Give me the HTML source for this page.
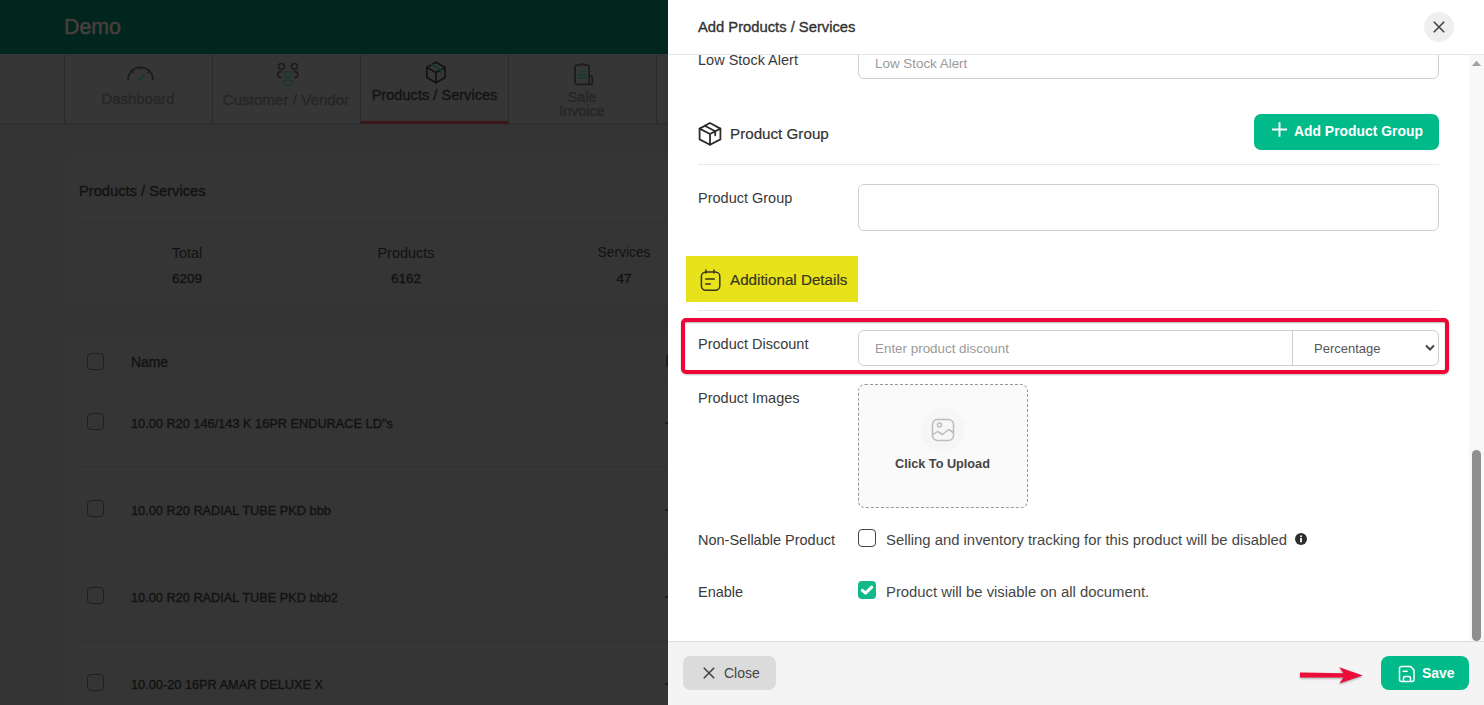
<!DOCTYPE html>
<html><head><meta charset="utf-8">
<style>
*{box-sizing:border-box;margin:0;padding:0}
html,body{width:1484px;height:705px;overflow:hidden;background:#333333;font-family:"Liberation Sans",sans-serif}
.abs{position:absolute}
#hdr{left:0;top:0;width:1484px;height:54px;background:#00261e}
#demo{left:64px;top:15px;font-size:21.3px;color:#483f3c;-webkit-text-stroke:0.55px #483f3c}
#tabs{left:0;top:54px;width:668px;height:70px;background:#363636;border-bottom:1px solid #2c2c2c}
.tdiv{top:54px;width:1px;height:69px;background:#2b2b2b}
.tlabel{font-size:14px;color:#262626;-webkit-text-stroke:0.4px #262626;text-align:center;white-space:nowrap}
.card{background:#353535;border-radius:10px;border-left:7px solid #343434;border-top:6px solid #343434}
.dtxt{color:#121212;font-size:14px;white-space:nowrap}
.sb{-webkit-text-stroke:0.35px #121212}
.nm{font-size:12.75px}
.row-line{height:1px;background:#313131}
.cbx{width:17px;height:17px;border:1.5px solid #1f1f1f;border-radius:4px}
/* panel */
#panel{left:668px;top:0;width:816px;height:705px;background:#fff}
.lbl{font-size:14px;color:#333}
.inp{border:1px solid #cfcfcf;border-radius:6px;background:#fff}
.ttl{font-size:14.75px;color:#333;-webkit-text-stroke:0.35px #333}
.ph{font-size:13.4px;color:#9a9a9a}
.sec{font-size:15.2px;color:#333;-webkit-text-stroke:0.2px #333}
.gbtn{background:#00ba8a;border-radius:7px}
.gbt{font-size:13.9px;font-weight:bold;color:#fff}
.upl{font-size:12.7px;font-weight:bold;color:#444}
.txt{font-size:14.85px;color:#464646}
.lbl{font-size:14.5px;color:#3a3a3a}
</style></head>
<body>
<div id="hdr" class="abs"></div>
<div id="demo" class="abs">Demo</div>
<div id="tabs" class="abs"></div>
<div class="abs tdiv" style="left:64px"></div>
<div class="abs tdiv" style="left:212px"></div>
<div class="abs tdiv" style="left:360px"></div>
<div class="abs tdiv" style="left:508px"></div>
<div class="abs tdiv" style="left:656px"></div>
<svg class="abs" style="left:120px;top:58px" width="40" height="30" viewBox="0 0 40 30" fill="none" stroke-linecap="round"><path d="M8.1 21.7A12.4 12.4 0 0 1 32.9 21.7" stroke="#1c1c1c" stroke-width="1.8"/><path d="M20.5 9.3v2M11.7 13l1.3 1.3M29.3 13l-1.3 1.3" stroke="#1c1c1c" stroke-width="1.6"/><path d="M20.3 21.4L23.4 17.5" stroke="#163a2e" stroke-width="1.8"/></svg>
<svg class="abs" style="left:270px;top:58px" width="36" height="32" viewBox="0 0 36 32" fill="none" stroke-width="1.6"><circle cx="11.4" cy="8.4" r="2.9" stroke="#1c1c1c"/><circle cx="24.4" cy="8.4" r="2.9" stroke="#1c1c1c"/><path d="M12 13.6H10.2A3 3 0 0 0 10.2 19.5H12M23.6 13.6H25.4A3 3 0 0 1 25.4 19.5H23.6" stroke="#1c1c1c"/><circle cx="17.8" cy="16.4" r="3" stroke="#163a2e"/><ellipse cx="17.8" cy="24.6" rx="4.5" ry="2.9" stroke="#163a2e"/></svg>
<svg class="abs" style="left:420px;top:56px" width="32" height="32" viewBox="0 0 32 32" fill="none" stroke-width="1.7" stroke-linejoin="round" stroke-linecap="round"><path d="M16 6.2l9.2 5.2v10.2l-9.2 5.2l-9.2 -5.2v-10.2z" stroke="#121212"/><path d="M6.8 11.4L16 16.6L25.2 11.4M16 16.6V26.8" stroke="#121212"/><path d="M11.4 8.6L20.9 13.8V17.5" stroke="#123a2d"/></svg>
<svg class="abs" style="left:566px;top:58px" width="36" height="32" viewBox="0 0 36 32" fill="none" stroke-width="1.7" stroke-linejoin="round" stroke-linecap="round"><path d="M11.5 7.2h2.5l2.4 -1.6l2.4 1.6h2.5a1.8 1.8 0 0 1 1.8 1.8v17.3h-12.3a1.8 1.8 0 0 1 -1.8 -1.8v-15.5a1.8 1.8 0 0 1 1.8 -1.8z" stroke="#1c1c1c"/><path d="M23.6 18.2h1.4a1.4 1.4 0 0 1 1.4 1.4v5.3a1.4 1.4 0 0 1 -1.4 1.4h-1.4" stroke="#1c1c1c"/><path d="M14.5 13.5h4.2M12.8 16.9h7.6M12.8 20.1h7.6" stroke="#163a2e"/></svg>
<div class="abs tlabel" style="left:64px;width:148px;top:91px;font-size:14.9px">Dashboard</div>
<div class="abs tlabel" style="left:212px;width:148px;top:91px;font-size:15.2px">Customer / Vendor</div>
<div class="abs tlabel" style="left:361px;width:147px;top:87px;font-size:14.6px;color:#141414;-webkit-text-stroke-color:#141414">Products / Services</div>
<div class="abs" style="left:361px;top:121px;width:147px;height:3px;background:#3a1716"></div>
<div class="abs tlabel" style="left:508px;width:148px;top:91px;line-height:13.7px;font-size:14.3px">Sale<br>Invoice</div>

<div class="abs card" style="left:57px;top:150px;width:640px;height:155px"></div>
<div class="abs dtxt sb" style="left:79px;top:183px;font-size:14.7px">Products / Services</div>
<div class="abs row-line" style="left:79px;top:223px;width:600px"></div>
<div class="abs dtxt" style="left:147px;width:80px;text-align:center;top:245px;font-size:14.5px">Total</div>
<div class="abs dtxt sb" style="left:147px;width:80px;text-align:center;top:271px;font-size:13.4px">6209</div>
<div class="abs dtxt" style="left:366px;width:80px;text-align:center;top:245px;font-size:14.5px">Products</div>
<div class="abs dtxt sb" style="left:366px;width:80px;text-align:center;top:271px;font-size:13.4px">6162</div>
<div class="abs dtxt" style="left:584px;width:80px;text-align:center;top:245px;font-size:13.8px">Services</div>
<div class="abs dtxt sb" style="left:584px;width:80px;text-align:center;top:271px;font-size:13.4px">47</div>

<div class="abs card" style="left:57px;top:330px;width:640px;height:400px"></div>
<div class="abs cbx" style="left:87px;top:353px"></div>
<div class="abs dtxt sb" style="left:131px;top:354px;font-size:13.9px">Name</div>
<div class="abs row-line" style="left:79px;top:379px;width:600px"></div>
<div class="abs cbx" style="left:87px;top:413px"></div>
<div class="abs dtxt sb nm" style="left:131px;top:416px">10.00 R20 146/143 K 16PR ENDURACE LD"s</div>
<div class="abs row-line" style="left:79px;top:466px;width:600px"></div>
<div class="abs cbx" style="left:87px;top:500px"></div>
<div class="abs dtxt sb nm" style="left:131px;top:503px">10.00 R20 RADIAL TUBE PKD bbb</div>
<div class="abs row-line" style="left:79px;top:553px;width:600px"></div>
<div class="abs cbx" style="left:87px;top:587px"></div>
<div class="abs dtxt sb nm" style="left:131px;top:590px">10.00 R20 RADIAL TUBE PKD bbb2</div>
<div class="abs row-line" style="left:79px;top:640px;width:600px"></div>
<div class="abs cbx" style="left:87px;top:674px"></div>
<div class="abs dtxt sb nm" style="left:131px;top:677px">10.00-20 16PR AMAR DELUXE X</div>
<div class="abs" style="left:666px;top:355px;width:2px;height:12px;background:#1c1c1c"></div>
<div class="abs" style="left:665px;top:422px;width:3px;height:1.5px;background:#1c1c1c"></div>
<div class="abs" style="left:665px;top:509px;width:3px;height:1.5px;background:#1c1c1c"></div>
<div class="abs" style="left:665px;top:596px;width:3px;height:1.5px;background:#1c1c1c"></div>
<div class="abs" style="left:665px;top:683px;width:3px;height:1.5px;background:#1c1c1c"></div>
<!-- PANEL -->
<div id="panel" class="abs"></div>
<div class="abs" style="left:668px;top:54px;width:816px;height:1px;background:#e6e6e6"></div>
<div class="abs ttl" style="left:698px;top:19px">Add Products / Services</div>
<div class="abs" style="left:1424px;top:12px;width:30px;height:30px;border-radius:50%;background:#efefef"></div>
<svg class="abs" style="left:1433px;top:21px" width="12" height="12" viewBox="0 0 12 12"><path d="M0.8 0.8L11.2 11.2M11.2 0.8L0.8 11.2" stroke="#444" stroke-width="1.6" fill="none"/></svg>
<!-- scroll track -->
<div class="abs" style="left:1469px;top:55px;width:15px;height:586px;background:#f8f8f8"></div>
<svg class="abs" style="left:1471px;top:60px" width="11" height="7" viewBox="0 0 11 7"><path d="M0.8 6L5.5 0.8L10.2 6Z" fill="#a3a3a3"/></svg>
<div class="abs" style="left:1472px;top:450px;width:9px;height:191px;border-radius:5px;background:#8f8f8f"></div>

<!-- body clip -->
<div class="abs" style="left:668px;top:55px;width:801px;height:586px;overflow:hidden">
  <div class="abs lbl" style="left:30px;top:-3px">Low Stock Alert</div>
  <div class="abs inp" style="left:190px;top:-20px;width:581px;height:44px"></div>
  <div class="abs ph" style="left:207px;top:1px">Low Stock Alert</div>
</div>

<svg class="abs" style="left:696px;top:120px" width="28" height="28" viewBox="0 0 28 28" fill="none" stroke="#2b2b2b" stroke-width="1.8" stroke-linecap="round" stroke-linejoin="round"><path d="M14 3L24.4 8.6V19.4L14 24.8L3.6 19.4V8.6Z"/><path d="M3.6 8.6L14 14L24.4 8.6M14 14V24.8"/><path d="M8.8 5.8L19.2 11.3V15.3"/></svg>
<div class="abs sec" style="left:730px;top:125px">Product Group</div>
<div class="abs gbtn" style="left:1254px;top:114px;width:185px;height:36px"></div>
<svg class="abs" style="left:1271px;top:121px" width="17" height="17" viewBox="0 0 17 17"><path d="M8.5 1.2V15.8M1 8.5H16" stroke="#fff" stroke-width="1.9" fill="none"/></svg>
<div class="abs gbt" style="left:1294px;top:123px">Add Product Group</div>
<div class="abs" style="left:698px;top:164px;width:741px;height:1px;background:#e9e9e9"></div>

<div class="abs lbl" style="left:698px;top:190px">Product Group</div>
<div class="abs inp" style="left:858px;top:184px;width:581px;height:47px"></div>

<div class="abs" style="left:686px;top:256px;width:172px;height:46px;background:#e8e21a"></div>
<svg class="abs" style="left:698px;top:268px" width="24" height="24" viewBox="0 0 24 24" fill="none" stroke="#38361c" stroke-width="1.5" stroke-linecap="round" stroke-linejoin="round"><rect x="3.4" y="4" width="18.4" height="18.2" rx="4.5"/><path d="M7.9 2v3M16 2v3M7.7 10.9h8.6M7.7 16h4.6"/></svg>
<div class="abs sec" style="left:730px;top:271px;color:#38361c">Additional Details</div>
<div class="abs" style="left:698px;top:310px;width:741px;height:1px;background:#e9e9e9"></div>

<div class="abs" style="left:681px;top:318px;width:768px;height:56px;border:4px solid #ec0536;border-radius:5px;border-top-width:4.5px;box-shadow:0 1px 2px rgba(0,0,0,0.25), inset 0 1px 1.5px rgba(0,0,0,0.3)"></div>
<div class="abs lbl" style="left:698px;top:336px">Product Discount</div>
<div class="abs" style="left:858px;top:330px;width:581px;height:36px;border:1px solid #cfcfcf;border-radius:6px"></div>
<div class="abs" style="left:1292px;top:331px;width:1px;height:34px;background:#cfcfcf"></div>
<div class="abs ph" style="left:875px;top:341px">Enter product discount</div>
<div class="abs" style="left:1314px;top:341px;font-size:13px;color:#555">Percentage</div>
<svg class="abs" style="left:1425px;top:344px" width="10" height="8" viewBox="0 0 10 8"><path d="M1 1.5L5 5.5L9 1.5" stroke="#444" stroke-width="2" fill="none"/></svg>

<div class="abs lbl" style="left:698px;top:390px">Product Images</div>
<div class="abs" style="left:858px;top:384px;width:170px;height:124px;border:1px dashed #999;border-radius:7px;background:#fafafa"></div>
<div class="abs" style="left:921px;top:408px;width:44px;height:44px;border-radius:50%;background:#f6f6f6"></div>
<svg class="abs" style="left:931px;top:418px" width="24" height="24" viewBox="0 0 24 24" fill="none" stroke="#bdbdbd" stroke-width="1.5" stroke-linecap="round" stroke-linejoin="round"><rect x="1.5" y="1.5" width="21" height="21" rx="5"/><circle cx="8.5" cy="7" r="2"/><path d="M1.5 17l5 -3.5l5 3l6 -5l5 3"/></svg>
<div class="abs upl" style="left:895px;top:457px">Click To Upload</div>

<div class="abs lbl" style="left:698px;top:532px">Non-Sellable Product</div>
<div class="abs" style="left:858px;top:529px;width:18px;height:18px;border:1.5px solid #444;border-radius:4px;background:#fff"></div>
<div class="abs txt" style="left:886px;top:532px">Selling and inventory tracking for this product will be disabled</div>
<svg class="abs" style="left:1295px;top:533px" width="12" height="12" viewBox="0 0 12 12"><circle cx="6" cy="6" r="6" fill="#2e2e2e"/><rect x="5.1" y="5" width="1.8" height="4.3" fill="#fff"/><circle cx="6" cy="3.2" r="1" fill="#fff"/></svg>

<div class="abs lbl" style="left:698px;top:584px">Enable</div>
<div class="abs" style="left:858px;top:581px;width:18px;height:18px;border-radius:4px;background:#13b98a"></div>
<svg class="abs" style="left:858px;top:581px" width="18" height="18" viewBox="0 0 18 18"><path d="M4.3 9.4L7.5 12.2L13.7 6.2" stroke="#fff" stroke-width="3" fill="none" stroke-linecap="round" stroke-linejoin="round"/></svg>
<div class="abs txt" style="left:886px;top:584px">Product will be visiable on all document.</div>

<!-- footer -->
<div class="abs" style="left:668px;top:641px;width:816px;height:64px;background:#f4f4f4;border-top:1px solid #dcdcdc"></div>
<div class="abs" style="left:683px;top:656px;width:93px;height:34px;border-radius:7px;background:#dbdbdb"></div>
<svg class="abs" style="left:703px;top:667px" width="12" height="12" viewBox="0 0 12 12"><path d="M0.8 0.8L11.2 11.2M11.2 0.8L0.8 11.2" stroke="#444" stroke-width="1.6" fill="none"/></svg>
<div class="abs" style="left:724px;top:665px;font-size:14px;color:#444">Close</div>
<div class="abs gbtn" style="left:1381px;top:656px;width:88px;height:34px;border-radius:8px"></div>
<svg class="abs" style="left:1398.3px;top:664.5px" width="18" height="18" viewBox="0 0 18 18" fill="none" stroke="#fff" stroke-width="1.5" stroke-linejoin="round"><path d="M3.5 1.5h9l3.5 3.5v9.5a2 2 0 0 1 -2 2h-10.5a2 2 0 0 1 -2 -2v-11a2 2 0 0 1 2 -2z"/><path d="M5.5 16.5v-3.5a1.5 1.5 0 0 1 1.5 -1.5h4a1.5 1.5 0 0 1 1.5 1.5v3.5"/><path d="M4.6 6.3h5.2"/></svg>
<div class="abs gbt" style="left:1422px;top:665px">Save</div>
<svg class="abs" style="left:1296px;top:664px" width="72" height="24" viewBox="0 0 72 24"><g style="filter:drop-shadow(0 1px 1px rgba(0,0,0,0.35))"><path d="M4 8.4L47.5 9.2L43.3 3.3L66.7 11.6L43.3 19.5L47.5 13.4L4 13.4Z" fill="#ec0c3a"/></g></svg>
</body></html>
